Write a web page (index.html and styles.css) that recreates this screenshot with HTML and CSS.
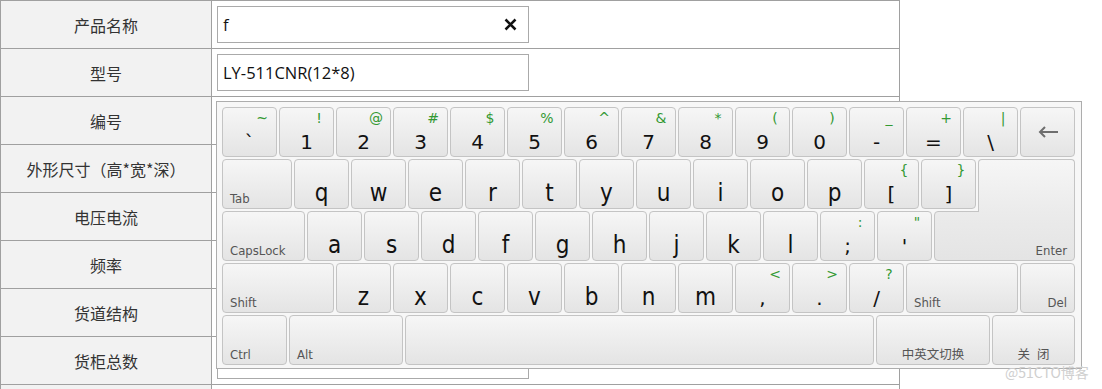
FILE: index.html
```html
<!DOCTYPE html>
<html lang="zh-CN">
<head>
<meta charset="utf-8">
<title>软键盘</title>
<link rel="stylesheet" href="styles.css">
</head>
<body>
<div class="form">
  <div class="row"><div class="label">产品名称</div><div class="value"><div class="field"><span>f</span><svg class="clear" width="13" height="13" viewBox="0 0 13 13"><path d="M1.5 1.5L11.5 11.5M11.5 1.5L1.5 11.5" stroke="#111" stroke-width="2.5" fill="none"/></svg></div></div></div>
  <div class="row"><div class="label">型号</div><div class="value"><div class="field"><span>LY-511CNR(12*8)</span></div></div></div>
  <div class="row"><div class="label">编号</div><div class="value"><div class="field"></div></div></div>
  <div class="row"><div class="label">外形尺寸（高*宽*深）</div><div class="value"><div class="field"></div></div></div>
  <div class="row"><div class="label">电压电流</div><div class="value"><div class="field"></div></div></div>
  <div class="row"><div class="label">频率</div><div class="value"><div class="field"></div></div></div>
  <div class="row"><div class="label">货道结构</div><div class="value"><div class="field"></div></div></div>
  <div class="row"><div class="label">货柜总数</div><div class="value"><div class="field"></div></div></div>
  <div class="row"><div class="label"></div><div class="value"><div class="field"></div></div></div>
</div>

<div class="keyboard">
  <div class="krow">
    <div class="key"><span class="sh">~</span><span class="ch">`</span></div>
    <div class="key"><span class="sh">!</span><span class="ch">1</span></div>
    <div class="key"><span class="sh">@</span><span class="ch">2</span></div>
    <div class="key"><span class="sh">#</span><span class="ch">3</span></div>
    <div class="key"><span class="sh">$</span><span class="ch">4</span></div>
    <div class="key"><span class="sh">%</span><span class="ch">5</span></div>
    <div class="key"><span class="sh">^</span><span class="ch">6</span></div>
    <div class="key"><span class="sh">&amp;</span><span class="ch">7</span></div>
    <div class="key"><span class="sh">*</span><span class="ch">8</span></div>
    <div class="key"><span class="sh">(</span><span class="ch">9</span></div>
    <div class="key"><span class="sh">)</span><span class="ch">0</span></div>
    <div class="key"><span class="sh">_</span><span class="ch">-</span></div>
    <div class="key"><span class="sh">+</span><span class="ch">=</span></div>
    <div class="key"><span class="sh">|</span><span class="ch">\</span></div>
    <div class="key bs"><svg width="22" height="12" viewBox="0 0 22 12"><path d="M21 6H3M8 1L3 6L8 11" stroke="#6e6e6e" stroke-width="2" fill="none"/></svg></div>
  </div>
  <div class="krow">
    <div class="key w70"><span class="lbl">Tab</span></div>
    <div class="key"><span class="ch lt">q</span></div>
    <div class="key"><span class="ch lt">w</span></div>
    <div class="key"><span class="ch lt">e</span></div>
    <div class="key"><span class="ch lt">r</span></div>
    <div class="key"><span class="ch lt">t</span></div>
    <div class="key"><span class="ch lt">y</span></div>
    <div class="key"><span class="ch lt">u</span></div>
    <div class="key"><span class="ch lt">i</span></div>
    <div class="key"><span class="ch lt">o</span></div>
    <div class="key"><span class="ch lt">p</span></div>
    <div class="key"><span class="sh">{</span><span class="ch">[</span></div>
    <div class="key"><span class="sh">}</span><span class="ch">]</span></div>
    <div class="key enter-top"></div>
  </div>
  <div class="krow">
    <div class="key w83"><span class="lbl">CapsLock</span></div>
    <div class="key"><span class="ch lt">a</span></div>
    <div class="key"><span class="ch lt">s</span></div>
    <div class="key"><span class="ch lt">d</span></div>
    <div class="key"><span class="ch lt">f</span></div>
    <div class="key"><span class="ch lt">g</span></div>
    <div class="key"><span class="ch lt">h</span></div>
    <div class="key"><span class="ch lt">j</span></div>
    <div class="key"><span class="ch lt">k</span></div>
    <div class="key"><span class="ch lt">l</span></div>
    <div class="key"><span class="sh">:</span><span class="ch">;</span></div>
    <div class="key"><span class="sh">"</span><span class="ch">'</span></div>
    <div class="key enter"><span class="lbl r">Enter</span></div>
  </div>
  <div class="krow">
    <div class="key w112"><span class="lbl">Shift</span></div>
    <div class="key"><span class="ch lt">z</span></div>
    <div class="key"><span class="ch lt">x</span></div>
    <div class="key"><span class="ch lt">c</span></div>
    <div class="key"><span class="ch lt">v</span></div>
    <div class="key"><span class="ch lt">b</span></div>
    <div class="key"><span class="ch lt">n</span></div>
    <div class="key"><span class="ch lt">m</span></div>
    <div class="key"><span class="sh">&lt;</span><span class="ch">,</span></div>
    <div class="key"><span class="sh">&gt;</span><span class="ch">.</span></div>
    <div class="key"><span class="sh">?</span><span class="ch">/</span></div>
    <div class="key w112"><span class="lbl">Shift</span></div>
    <div class="key"><span class="lbl r">Del</span></div>
  </div>
  <div class="krow">
    <div class="key w65"><span class="lbl">Ctrl</span></div>
    <div class="key w114"><span class="lbl">Alt</span></div>
    <div class="key w469"></div>
    <div class="key w114"><span class="lbl c">中英文切换</span></div>
    <div class="key w83"><span class="lbl c">关 闭</span></div>
  </div>
</div>

<div class="watermark">@51CTO博客</div>
</body>
</html>
```
FILE: styles.css
```css
* { box-sizing: border-box; }

html, body {
  margin: 0;
  height: 389px;
  overflow: hidden;
  background: #ffffff;
}

body {
  font-family: "Noto Sans CJK SC", "Noto Sans", sans-serif;
}

/* ---------- form table ---------- */
.form {
  width: 900px;
  height: 389px;
  overflow: hidden;
  border: 1px solid #a0a0a0;
  border-bottom: none;
}

.row {
  display: grid;
  grid-template-columns: 211px 687px;
  height: 48px;
  border-bottom: 1px solid #a0a0a0;
}

.label {
  background: #f2f2f2;
  border-right: 1px solid #a0a0a0;
  display: flex;
  align-items: center;
  justify-content: center;
  font-size: 16px;
  color: #333;
}

.value {
  padding: 5px;
}

.field {
  width: 312px;
  height: 37px;
  border: 1px solid #aaaaaa;
  background: #fff;
  display: flex;
  align-items: center;
  justify-content: space-between;
  padding: 0 11px 0 5px;
  font-family: "Open Sans", "Noto Sans", sans-serif;
  font-size: 16.5px;
  color: #111;
}

.clear { flex: none; }

/* ---------- keyboard ---------- */
.keyboard {
  position: absolute;
  left: 216px;
  top: 101px;
  width: 866px;
  padding: 5px 6px 3px 5px;
  border: 1px solid #adadad;
  background: #f7f7f7;
  display: flex;
  flex-direction: column;
  gap: 2px;
}

.krow {
  display: flex;
  gap: 2px;
  height: 50px;
}

.key {
  position: relative;
  flex: none;
  width: 55px;
  height: 50px;
  border: 1px solid #c4c4c4;
  border-radius: 4px;
  background: linear-gradient(#f6f6f6, #e4e4e4);
  display: flex;
  flex-direction: column;
}

.w65 { width: 65px; }
.w70 { width: 70px; }
.w83 { width: 83px; }
.w112 { width: 112px; }
.w114 { width: 114px; }
.w469 { width: 469px; }

.key.enter-top {
  width: 97px;
  height: 53px;
  border-bottom: none;
  border-radius: 4px 4px 0 0;
  background: linear-gradient(#f6f6f6, #ebebeb);
  z-index: 1;
}

.key.enter {
  width: 141px;
  border-top-right-radius: 0;
  background: linear-gradient(#ebebeb, #e4e4e4);
}

.key.bs {
  align-items: center;
  justify-content: center;
}

.sh {
  align-self: flex-end;
  width: 28px;
  margin-top: 3px;
  text-align: center;
  font-family: "DejaVu Sans", sans-serif;
  font-size: 14px;
  line-height: 14px;
  color: #339933;
}

.ch {
  margin-top: auto;
  padding-bottom: 4px;
  text-align: center;
  font-family: "DejaVu Sans", sans-serif;
  font-size: 20px;
  line-height: 20px;
  color: #111;
}

.ch.lt {
  font-family: "DejaVu Sans Condensed", "DejaVu Sans", sans-serif;
  font-stretch: condensed;
  font-size: 24px;
  line-height: 24px;
  padding-bottom: 3px;
}

.lbl {
  margin-top: auto;
  padding: 0 0 3px 7px;
  font-family: "DejaVu Sans Condensed", "DejaVu Sans", sans-serif;
  font-stretch: condensed;
  font-size: 13px;
  line-height: 13px;
  color: #555;
}

.lbl.r {
  text-align: right;
  padding: 0 7px 3px 0;
}

.lbl.c {
  text-align: center;
  padding: 0 0 4px 0;
  font-family: "Noto Sans CJK SC", sans-serif;
  font-size: 12.5px;
  word-spacing: 4px;
}

/* ---------- watermark ---------- */
.watermark {
  position: absolute;
  left: 1005px;
  top: 362px;
  font-family: "Noto Sans CJK SC", sans-serif;
  font-size: 14px;
  line-height: 20px;
  color: #cfcfcf;
}
```
